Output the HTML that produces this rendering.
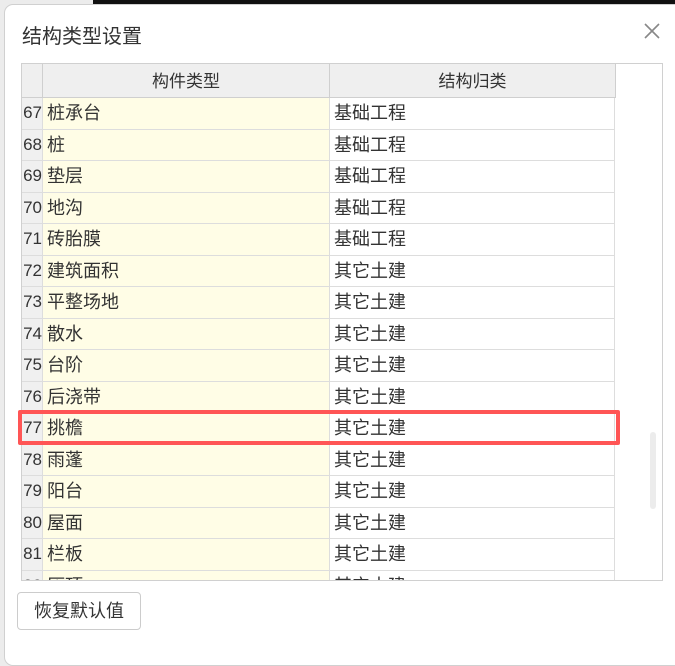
<html><head><style>
body{margin:0;width:675px;height:642px;background:#ececec;position:relative;overflow:hidden;font-family:"Liberation Sans","Noto Sans CJK SC",sans-serif;color:#333}
.bar{position:absolute;left:93px;top:0;width:582px;height:4px;background:#111}
.dlg{position:absolute;left:4px;top:4px;width:690px;height:660px;background:#fff;border-radius:9px;border:1px solid #d0d0d0}
.t{position:absolute;left:22px;top:20px;font-size:20px;color:#333}
.x{position:absolute;left:641px;top:20px;width:22px;height:22px}
.tbl{position:absolute;left:21px;top:63px;width:640px;height:516px;border:1px solid #d0d0d0;overflow:hidden;background:#fff}
.r{position:absolute;left:0;height:31.5px;width:594px;font-size:18px;line-height:30px}
.r div{position:absolute;top:0;height:30.5px;border-bottom:1px solid #ddd;border-right:1px solid #ddd;box-sizing:content-box}
.n{left:0;width:20px;background:#f0f0f0;text-align:right;font-size:17px}
.a{left:21px;width:282px;background:#fffde6;padding-left:4px}
.b{left:308px;width:280px;padding-left:4px;background:#fff}
.h{position:absolute;top:0;left:0;height:33px;width:594px;background:#efefef;border-bottom:1px solid #cfcfcf;font-size:17px}
.h div{position:absolute;top:0;height:33px;line-height:36px;text-align:center;border-right:1px solid #cfcfcf}
.sb{position:absolute;left:628px;top:368px;width:6px;height:77px;background:#ececec;border-radius:3px}
.red{position:absolute;left:18px;top:410px;width:594px;height:27px;border:4px solid #f55;border-radius:2px}
.btn{position:absolute;left:17px;top:592px;width:122px;height:36px;border:1px solid #ccc;border-radius:4px;font-size:18px;line-height:36px;text-align:center;background:#fff}
</style></head><body>
<div class="bar"></div>
<div class="dlg"></div>
<div class="t">结构类型设置</div>
<svg class="x" viewBox="0 0 22 22"><path d="M4 4L18 18M18 4L4 18" stroke="#888" stroke-width="1.6"/></svg>
<div class="tbl">
<div class="h"><div style="left:0;width:20px"></div><div style="left:21px;width:286px">构件类型</div><div style="left:308px;width:285px">结构归类</div></div>
<div id="rows"></div>
<div class="sb"></div>
</div>
<div class="red"></div>
<div class="btn">恢复默认值</div>
<script>
var d=[["67","桩承台","基础工程"],["68","桩","基础工程"],["69","垫层","基础工程"],["70","地沟","基础工程"],["71","砖胎膜","基础工程"],["72","建筑面积","其它土建"],["73","平整场地","其它土建"],["74","散水","其它土建"],["75","台阶","其它土建"],["76","后浇带","其它土建"],["77","挑檐","其它土建"],["78","雨蓬","其它土建"],["79","阳台","其它土建"],["80","屋面","其它土建"],["81","栏板","其它土建"],["82","压顶","其它土建"]];
var h="";d.forEach(function(r,i){h+='<div class="r" style="top:'+(34+i*31.5)+'px"><div class="n">'+r[0]+'</div><div class="a">'+r[1]+'</div><div class="b">'+r[2]+'</div></div>'});
document.getElementById("rows").outerHTML=h;
</script>
</body></html>
